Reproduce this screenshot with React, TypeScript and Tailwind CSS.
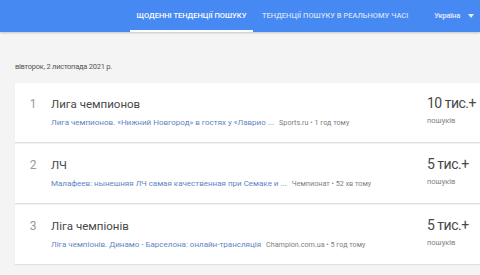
import { Fragment } from "react";

// daily trends list data
const trends = [
  {
    rank: 1,
    title: "Лига чемпионов",
    snippet: "Лига чемпионов. «Нижний Новгород» в гостях у «Лаврио ...",
    source: "Sports.ru • 1 год тому",
    count: "10 тис.+",
  },
  {
    rank: 2,
    title: "ЛЧ",
    snippet: "Малафеев: нынешняя ЛЧ самая качественная при Семаке и ...",
    source: "Чемпионат • 52 хв тому",
    count: "5 тис.+",
  },
  {
    rank: 3,
    title: "Ліга чемпіонів",
    snippet: "Ліга чемпіонів. Динамо - Барселона: онлайн-трансляція",
    source: "Champion.com.ua • 5 год тому",
    count: "5 тис.+",
  },
];

export default function App() {
  return (
    <div className="w-[480px] h-[275px] overflow-hidden bg-[#f4f4f4] font-['Roboto',sans-serif]">
      {/* HEADER */}
      <div className="h-[32px] bg-[#4689f2] flex items-stretch shadow-[0_1px_2px_rgba(0,0,0,0.2)] whitespace-nowrap">
        <div className="w-[130px]" />
        <div className="w-[123px] flex items-center justify-center border-b-[2px] border-white pt-[2px]">
          <span className="text-[7.5px] font-medium text-white">ЩОДЕННІ ТЕНДЕНЦІЇ ПОШУКУ</span>
        </div>
        <div className="pl-[9px] flex items-center">
          <span className="text-[7.5px] font-medium text-white/75">ТЕНДЕНЦІЇ ПОШУКУ В РЕАЛЬНОМУ ЧАСІ</span>
        </div>
        <div className="ml-[26px] flex items-center">
          <span className="text-[7.5px] font-medium text-white/85 tracking-[-0.2px]">Україна</span>
          <svg className="ml-[8px]" width="6" height="4" viewBox="0 0 6 4">
            <path d="M0 0h6L3 4z" fill="rgba(255,255,255,0.85)" />
          </svg>
        </div>
      </div>

      {/* DATE */}
      <div className="pl-[15px] pt-[30px] pb-[11px] text-[7.5px] leading-[10px] tracking-[-0.25px] text-[#555] whitespace-nowrap">
        вівторок, 2 листопада 2021 р.
      </div>

      {/* LIST */}
      <div className="ml-[15px] w-[475px] flex flex-col gap-[2px]">
        {trends.map((t) => (
          <Fragment key={t.rank}>
            <div className="h-[59px] bg-white shadow-[0_1px_1px_rgba(0,0,0,0.08)] flex items-start whitespace-nowrap">
              <div className="w-[36px] pt-[14px] text-[12px] leading-[14px] text-[#999] text-center">{t.rank}</div>
              <div className="w-[376px] pt-[14px]">
                <div className="text-[11.5px] leading-[14px] text-[#484848]">{t.title}</div>
                <div className="mt-[7px] text-[8px] leading-[10px]">
                  <span className="text-[#6384c6]">{t.snippet}</span>
                  <span className="ml-[5px] text-[7.2px] text-[#808080]">{t.source}</span>
                </div>
              </div>
              <div className="flex-1 pt-[12px]">
                <div className="text-[14px] leading-[16px] tracking-[-0.5px] text-[#484848]">{t.count}</div>
                <div className="mt-[5px] text-[7.5px] leading-[10px] text-[#808080]">пошуків</div>
              </div>
            </div>
          </Fragment>
        ))}
      </div>
    </div>
  );
}
